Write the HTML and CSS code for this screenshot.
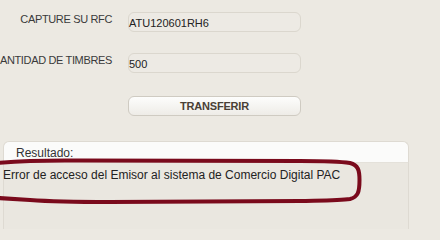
FILE: index.html
```html
<!DOCTYPE html>
<html lang="es">
<head>
<meta charset="utf-8">
<title>Transferir timbres</title>
<link rel="stylesheet" href="styles.css">
</head>
<body>
<div class="page">
  <form class="form">
    <div class="row">
      <label class="lbl">CAPTURE SU RFC</label>
      <div class="field">ATU120601RH6</div>
    </div>
    <div class="row">
      <label class="lbl">CANTIDAD DE TIMBRES</label>
      <div class="field">500</div>
    </div>
    <div class="row row-btn">
      <span></span>
      <button type="button" class="btn">TRANSFERIR</button>
    </div>
  </form>
  <section class="result">
    <div class="result-head">Resultado:</div>
    <div class="result-body"><p class="msg">Error de acceso del Emisor al sistema de Comercio Digital PAC</p></div>
  </section>
  <svg class="annot" width="440" height="229" viewBox="0 0 440 229">
    <path d="M-2,163 C20,161 40,160 80,160.5 L300,161 C325,161 340,161.5 350,163 C358,165 359.5,170 359.5,180 C359.5,192 358,197 350,199 C340,200.5 320,200.5 300,201 L110,202 C80,202 50,201.5 30,200 L-2,198" fill="none" stroke="#7a0a1c" stroke-width="4" stroke-linejoin="round"/>
  </svg>
</div>
</body>
</html>
```
FILE: styles.css
```css
html, body {
  margin: 0;
  padding: 0;
}
body {
  background: #ece9e2;
  font-family: "Liberation Sans", Arial, sans-serif;
  color: #333;
  width: 440px;
  height: 229px;
  overflow: hidden;
}
.page {
  position: relative;
  width: 440px;
  height: 229px;
  overflow: hidden;
}
.form {
  display: flex;
  flex-direction: column;
  gap: 21px;
  padding-top: 12px;
}
.row {
  display: grid;
  grid-template-columns: 112px 173px;
  column-gap: 16px;
}
.row-btn {
  margin-top: 2px;
}
.lbl {
  display: flex;
  justify-content: flex-end;
  white-space: nowrap;
  font-size: 11px;
  line-height: 13px;
  letter-spacing: -0.35px;
  color: #3a3a3a;
  padding-top: 1px;
}
.field {
  box-sizing: border-box;
  height: 20px;
  border: 1px solid #dbd7ce;
  border-radius: 6px;
  background: #edeae4;
  font-size: 11px;
  line-height: 16px;
  padding: 2px 0 0 0;
  color: #222;
}
.btn {
  box-sizing: border-box;
  height: 20px;
  margin: 0;
  padding: 0;
  border: 1px solid #cfcbc2;
  border-radius: 6px;
  background: linear-gradient(#fdfdfc, #eeece7);
  font-family: "Liberation Sans", Arial, sans-serif;
  font-weight: bold;
  font-size: 11px;
  letter-spacing: -0.2px;
  color: #4a3f36;
}
.result {
  margin: 25px 0 0 3px;
  width: 406px;
}
.result-head {
  box-sizing: border-box;
  height: 22px;
  background: #fbfbfa;
  border: 1px solid #dedad2;
  border-bottom-color: #e4e1da;
  border-radius: 6px 6px 0 0;
  padding: 4px 0 0 12px;
  font-size: 12px;
  line-height: 14px;
  color: #333;
}
.result-body {
  height: 80px;
  background: #eae7e0;
  border-left: 1px solid #dedad2;
  border-right: 1px solid #dedad2;
  padding-top: 5px;
}
.msg {
  margin: 0 0 0 -1px;
  font-size: 12px;
  line-height: 14px;
  color: #222;
}
.annot {
  position: absolute;
  left: 0;
  top: 0;
  pointer-events: none;
}
```
